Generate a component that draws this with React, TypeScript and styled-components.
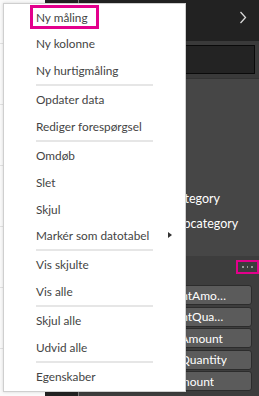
import { createGlobalStyle, styled } from 'styled-components';

const GlobalStyle = createGlobalStyle`
  html, body {
    margin: 0;
    padding: 0;
    background: #fafafa;
    font-family: Lato, 'Open Sans', sans-serif;
  }
`;

type MenuEntry = { label: string; sub?: boolean; highlight?: boolean } | 'sep';

const menuEntries: MenuEntry[] = [
  { label: 'Ny måling', highlight: true },
  { label: 'Ny kolonne' },
  { label: 'Ny hurtigmåling' },
  'sep',
  { label: 'Opdater data' },
  { label: 'Rediger forespørgsel' },
  'sep',
  { label: 'Omdøb' },
  { label: 'Slet' },
  { label: 'Skjul' },
  { label: 'Markér som datotabel', sub: true },
  'sep',
  { label: 'Vis skjulte' },
  { label: 'Vis alle' },
  'sep',
  { label: 'Skjul alle' },
  { label: 'Udvid alle' },
  'sep',
  { label: 'Egenskaber' },
];

const fields = ['Category', 'Subcategory'];
const measures = ['DiscountAmount', 'DiscountQuantity', 'ReturnAmount', 'ReturnQuantity', 'SalesAmount'];

export default function App() {
  return (
    <>
      <GlobalStyle />
      <Page>
        <LeftPane>
          {[0, 1, 2, 3, 4, 5].map((i) => (
            <LeftRow key={i} $first={i === 0} />
          ))}
        </LeftPane>
        <MidPane />
        <RightPanel>
          <Header>
            <svg width="8" height="13" viewBox="0 0 8 13">
              <polyline points="1.5,1 6.5,6.5 1.5,12" fill="none" stroke="#d8d8d8" strokeWidth="1.3" />
            </svg>
          </Header>
          <SearchBar>
            <SearchInput />
          </SearchBar>
          <FieldList>
            {fields.map((f) => (
              <FieldItem key={f}>{f}</FieldItem>
            ))}
          </FieldList>
          <Wells>
            <WellsHeader>
              <MoreButton>
                <Dot />
                <Dot />
                <Dot />
              </MoreButton>
            </WellsHeader>
            <MeasureList>
              {measures.map((m) => (
                <MeasureButton key={m}>
                  <MeasureLabel>{m}</MeasureLabel>
                </MeasureButton>
              ))}
            </MeasureList>
          </Wells>
        </RightPanel>

        <Menu>
          {menuEntries.map((e, i) =>
            e === 'sep' ? (
              <Separator key={i} />
            ) : (
              <MenuItem key={i}>
                {e.label}
                {e.highlight && <Highlight />}
                {e.sub && <SubArrow />}
              </MenuItem>
            ),
          )}
        </Menu>
      </Page>
    </>
  );
}

const Page = styled.div`
  position: relative;
  display: flex;
  width: 259px;
  height: 396px;
  overflow: hidden;
`;

const LeftPane = styled.div`
  width: 45px;
  background: #fafafa;
  display: flex;
  flex-direction: column;
`;

const LeftRow = styled.div<{ $first?: boolean }>`
  height: ${(p) => (p.$first ? '42.5px' : '60px')};
  flex-shrink: 0;
  border-bottom: 1px solid #e2e2e2;
`;

const MidPane = styled.div`
  width: 33px;
  background: #222;
  border-right: 1px solid #7a7a7a;
`;

const RightPanel = styled.div`
  flex: 1;
  display: flex;
  flex-direction: column;
  background: #2d2d2d;
`;

const Header = styled.div`
  height: 41px;
  background: #222;
  display: flex;
  align-items: center;
  justify-content: flex-end;
  padding-right: 12px;
  padding-bottom: 6px;
  box-sizing: border-box;
`;

const SearchBar = styled.div`
  height: 38px;
  background: #3a3a3a;
  padding: 4px 4px 4px 0;
  box-sizing: border-box;
  display: flex;
  border-bottom: 1px solid #333;
`;

const SearchInput = styled.div`
  flex: 1;
  margin-left: 40px;
  background: #232323;
  border: 1px solid #0a0a0a;
`;

const FieldList = styled.div`
  height: 177px;
  background: #464646;
  display: flex;
  flex-direction: column;
  justify-content: flex-end;
  padding-bottom: 24px;
  box-sizing: border-box;
  gap: 8px;
`;

const FieldItem = styled.div`
  padding-left: 91px;
  color: #fff;
  font-size: 12.5px;
  line-height: 17px;
  white-space: nowrap;
`;

const Wells = styled.div`
  flex: 1;
  background: #3d3d3d;
  display: flex;
  flex-direction: column;
`;

const WellsHeader = styled.div`
  height: 29px;
  display: flex;
  justify-content: flex-end;
  align-items: flex-start;
  padding-top: 4px;
  box-sizing: border-box;
`;

const MoreButton = styled.div`
  width: 23px;
  height: 14px;
  box-sizing: border-box;
  border: 2.5px solid #e3008c;
  display: flex;
  align-items: center;
  justify-content: center;
  gap: 3px;
`;

const Dot = styled.span`
  width: 1.5px;
  height: 1.5px;
  background: #9a9a9a;
`;

const MeasureList = styled.div`
  display: flex;
  flex-direction: column;
  gap: 1.5px;
  padding-left: 59px;
  padding-right: 7px;
`;

const MeasureButton = styled.div`
  height: 20px;
  box-sizing: border-box;
  background: #5b5b5b;
  border: 1px solid #2c2c2c;
  border-radius: 3px;
  display: flex;
  align-items: center;
  padding-left: 6px;
`;

const MeasureLabel = styled.span`
  color: #fff;
  font-size: 12px;
  max-width: 84px;
  white-space: nowrap;
  overflow: hidden;
  text-overflow: ellipsis;
`;

const Menu = styled.div`
  position: absolute;
  left: 3px;
  top: 3px;
  width: 183px;
  height: 389px;
  box-sizing: border-box;
  background: #fff;
  border: 1px solid #cfcfcf;
  box-shadow: 0 0 3px rgba(0, 0, 0, 0.15);
  display: flex;
  flex-direction: column;
`;

const MenuItem = styled.div`
  position: relative;
  height: 26.6px;
  flex-shrink: 0;
  display: flex;
  align-items: center;
  padding-left: 32px;
  font-size: 11.8px;
  color: #444;
  white-space: nowrap;
`;

const Highlight = styled.span`
  position: absolute;
  left: 26px;
  top: 1px;
  width: 69px;
  height: 24px;
  box-sizing: border-box;
  border: 3px solid #e3008c;
`;

const SubArrow = styled.span`
  position: absolute;
  right: 13px;
  top: 50%;
  margin-top: -3.5px;
  width: 0;
  height: 0;
  border-left: 4px solid #333;
  border-top: 3.5px solid transparent;
  border-bottom: 3.5px solid transparent;
`;

const Separator = styled.div`
  height: 2px;
  flex-shrink: 0;
  margin: 0.4px 32px 0.4px 32px;
  background: #e6e6e6;
`;
